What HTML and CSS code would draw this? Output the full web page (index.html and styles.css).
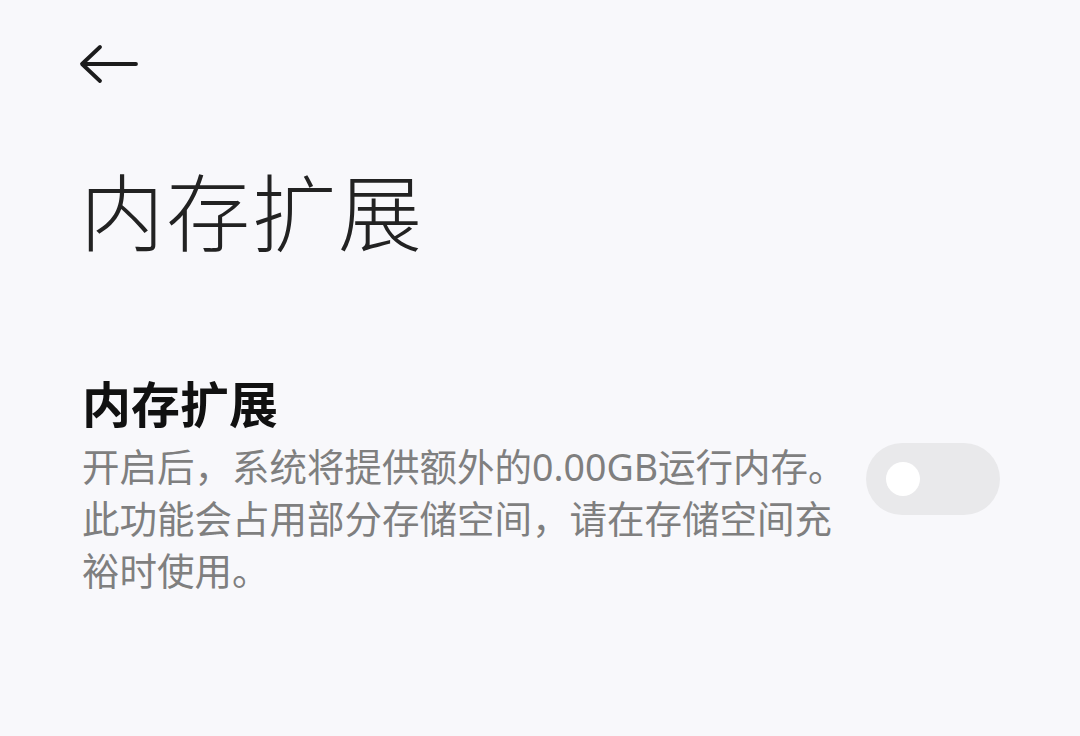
FILE: index.html
```html
<!DOCTYPE html>
<html lang="zh-CN">
<head>
  <meta charset="UTF-8" />
  <title>内存扩展</title>
  <link rel="stylesheet" href="styles.css">
</head>
<body>
  <div class="page">
    <div class="topbar">
      <button class="back" aria-label="返回">
        <svg width="62" height="40" viewBox="0 0 62 40">
          <path d="M22 3 L4 20 L22 37 M5 20 H58" fill="none" stroke="#1c1c1c" stroke-width="3.8" stroke-linecap="round" stroke-linejoin="round" />
        </svg>
      </button>
    </div>

    <h1 class="page-title">内存扩展</h1>

    <div class="setting">
      <div class="setting-text">
        <h2>内存扩展</h2>
        <p>开启后，系统将提供额外的0.00GB运行内存。此功能会占用部分存储空间，请在存储空间充裕时使用。</p>
      </div>
      <div class="switch">
        <span class="knob"></span>
      </div>
    </div>
  </div>
</body>
</html>
```

FILE: styles.css
```css
body {
  margin: 0;
  padding: 0;
  background-color: #f8f8fb;
  font-family: 'Noto Sans', 'Noto Sans CJK SC', sans-serif;
  color: #1c1c1c;
}

.page {
  padding: 0 80px 0 82px;
}

.topbar {
  padding-top: 44px;
  height: 40px;
}

.back {
  margin: 0 0 0 -4px;
  padding: 0;
  border: none;
  background: none;
  display: block;
  cursor: pointer;
}

.page-title {
  margin: 69px 0 0 -2px;
  font-size: 84px;
  font-weight: 300;
  letter-spacing: 2px;
  line-height: 120px;
  color: #222;
}

.setting {
  display: flex;
  justify-content: space-between;
  align-items: center;
  margin-top: 100px;
}

.setting-text {
  width: 770px;
}

.setting-text h2 {
  margin: 0;
  font-size: 49px;
  font-weight: 700;
  line-height: 62px;
  color: #111;
}

.setting-text p {
  margin: 6px 0 0;
  font-size: 37.5px;
  line-height: 52px;
  color: #7f7f7f;
}

/* switch sits a little above the middle of the text block */
.switch {
  width: 134px;
  height: 72px;
  margin-bottom: 12px;
  border-radius: 36px;
  background-color: #e9e9eb;
  display: flex;
  align-items: center;
  padding-left: 20px;
  box-sizing: border-box;
}

.knob {
  width: 34px;
  height: 34px;
  border-radius: 50%;
  background-color: #fff;
}
```
